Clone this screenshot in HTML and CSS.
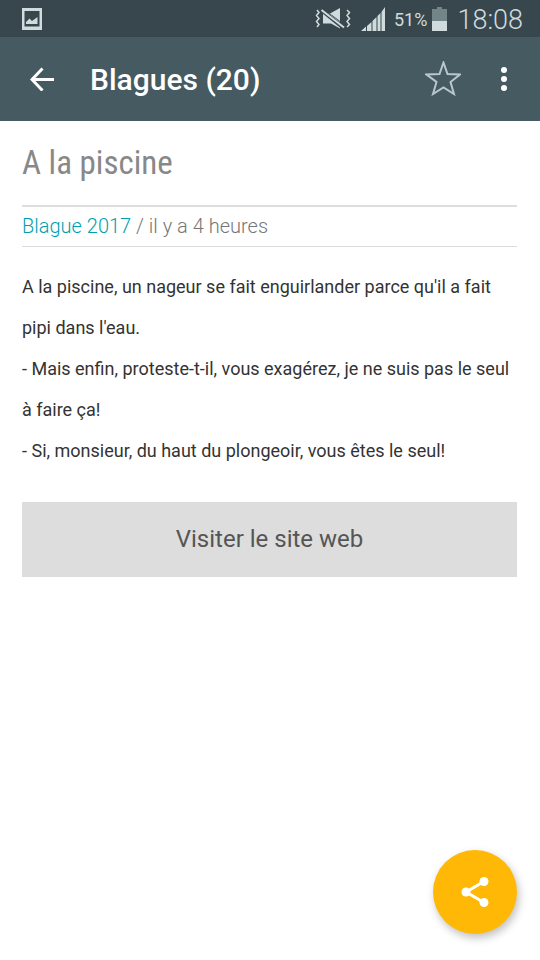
FILE: index.html
```html
<!DOCTYPE html>
<html lang="fr">
<head>
<meta charset="utf-8">
<meta name="viewport" content="width=device-width, initial-scale=1">
<title>Blagues (20)</title>
<link rel="stylesheet" href="styles.css">
</head>
<body>
<div class="status">
  <svg class="status-picture" width="20" height="22" viewBox="0 0 20 22" aria-hidden="true">
    <path fill-rule="evenodd" d="M0 0H20V22H0ZM2.500 3V18.500H17.500V3Z"/>
    <path d="M4 16V14L7.500 10.500L10 13L15.500 9V16Z"/>
  </svg>
  <div class="status-right">
    <svg width="36" height="24" viewBox="0 0 36 24" aria-hidden="true">
      <path class="line" d="M2 3L4 5.500L1.500 8.500L4 11.500L1.500 14.500L4 17.500L2 20M32 3L34.500 5.500L32 8.500L34.500 11.500L32 14.500L34.500 17.500L32 20"/>
      <path d="M8 6.500H14L25 15V21.500L16 16.500H8ZM15 6.500L25 1V14Z"/>
      <path class="slash" d="M7 3.500L28 20.500"/>
      <path class="line wide" d="M6.500 3L29 20.500"/>
    </svg>
    <svg class="signal" width="24" height="24" viewBox="0 0 24 24" aria-hidden="true">
      <path d="M0 24L5 19.500V24ZM6 19L10.500 15V24H6ZM11.500 14L15.500 10V24H11.500ZM16.500 9L19.500 6V24H16.500ZM20.500 5L24 0V24H20.500Z"/>
    </svg>
    <span class="percent">51%</span>
    <svg class="battery" width="15" height="24" viewBox="0 0 15 24" aria-hidden="true">
      <path class="dim" d="M0 2H5V0H10V2H15V14H0Z"/>
      <path d="M0 14H15V24H0Z"/>
    </svg>
    <time class="clock">18:08</time>
  </div>
</div>
<header class="toolbar">
  <button class="icon-button" type="button" aria-label="Retour">
    <svg width="24" height="24" viewBox="0 0 24 24" aria-hidden="true"><path class="arrow" d="M24 12.500H2M12.500 1.500L2 12.500L12.500 23.500"/></svg>
  </button>
  <h1>Blagues (20)</h1>
  <button class="icon-button" type="button" aria-label="Favori">
    <svg width="36" height="36" viewBox="0 0 36 36" aria-hidden="true"><path class="star" d="M18.500 1.500L22.500 13L35 13.500L25.500 21L29 33L18.500 26.500L8 33L11.500 21L1.500 13.500L14.500 13Z"/></svg>
  </button>
  <button class="icon-button more" type="button" aria-label="Plus d'options">
    <svg width="6" height="24" viewBox="0 0 6 24" aria-hidden="true"><circle cx="3" cy="3" r="3"/><circle cx="3" cy="12" r="3"/><circle cx="3" cy="21" r="3"/></svg>
  </button>
</header>
<main>
  <h2>A la piscine</h2>
  <p class="meta"><a href="#">Blague 2017</a> / il y a 4 heures</p>
  <p class="story">A la piscine, un nageur se fait enguirlander parce qu'il a fait pipi dans l'eau.<br>- Mais enfin, proteste-t-il, vous exagérez, je ne suis pas le seul à faire ça!<br>- Si, monsieur, du haut du plongeoir, vous êtes le seul!</p>
  <a class="visit" href="#">Visiter le site web</a>
</main>
<button class="fab" type="button" aria-label="Partager">
  <svg width="28" height="30" viewBox="0 0 28 30" aria-hidden="true"><path class="share" d="M23 4.500L5 15L23 25.500"/><circle cx="5" cy="15" r="4.500"/><circle cx="23" cy="4.500" r="4.500"/><circle cx="23" cy="25.500" r="4.500"/></svg>
</button>
</body>
</html>
```

FILE: styles.css
```css
* {
  box-sizing: border-box;
}

body {
  margin: 0;
  min-height: 100vh;
  background: #fff;
  font-family: Roboto, "Liberation Sans", sans-serif;
}

h1, h2, p {
  margin: 0;
}

svg {
  display: block;
  fill: currentColor;
}

.status {
  display: flex;
  align-items: center;
  justify-content: space-between;
  height: 37px;
  padding: 0 17px 0 22px;
  background: #37474d;
  color: #cfdbdd;
}

.status-right {
  display: flex;
  align-items: center;
}

.line {
  fill: none;
  stroke: currentColor;
  stroke-width: 1.5;
}

.wide {
  stroke-width: 2;
}

.slash {
  fill: none;
  stroke: #37474d;
  stroke-width: 4;
}

.signal {
  margin-left: 10px;
}

.percent {
  margin: 2px 5px 0 9px;
  font-size: 18px;
}

.dim {
  fill: #74858a;
}

.clock {
  margin: 3px 0 0 10px;
  font-size: 27px;
  font-weight: 300;
}

.toolbar {
  display: flex;
  align-items: center;
  height: 84px;
  padding: 0 12px 0 18px;
  background: #455a61;
  color: #fff;
}

.icon-button {
  display: grid;
  place-items: center;
  width: 48px;
  height: 48px;
  padding: 0;
  border: 0;
  background: none;
  color: inherit;
}

.more {
  margin-left: 13px;
}

.arrow {
  fill: none;
  stroke: currentColor;
  stroke-width: 3;
}

.star {
  fill: none;
  stroke: #b9c7cc;
  stroke-width: 2;
}

h1 {
  flex: 1;
  padding: 2px 0 0 24px;
  font-size: 30px;
  font-weight: 500;
  line-height: 40px;
}

main {
  padding: 20px 23px 24px 22px;
}

h2 {
  padding-bottom: 20px;
  color: #888;
  font-family: "Roboto Condensed", Roboto, "Liberation Sans Narrow", sans-serif;
  font-size: 33px;
  font-weight: 400;
  line-height: 44px;
}

.meta {
  padding: 6px 0 7px;
  border-top: 2px solid #ddd;
  border-bottom: 1px solid #ddd;
  color: #777;
  font-size: 20px;
  font-weight: 300;
  line-height: 26px;
}

.meta a {
  color: #009fae;
  text-decoration: none;
}

.story {
  margin: 19px 0 31px;
  color: #333;
  font-size: 18px;
  line-height: 41px;
}

.visit {
  display: block;
  padding: 22px 16px;
  background: #ddd;
  color: #555;
  font-size: 24px;
  line-height: 31px;
  text-align: center;
  text-decoration: none;
}

.fab {
  position: fixed;
  right: 23px;
  bottom: 26px;
  display: grid;
  place-items: center;
  width: 84px;
  height: 84px;
  padding: 0;
  border: 0;
  border-radius: 50%;
  background: #ffb805;
  color: #fff;
  box-shadow: 2px 4px 8px rgba(0, 0, 0, 0.25);
}

.share {
  fill: none;
  stroke: currentColor;
  stroke-width: 3;
}
```
